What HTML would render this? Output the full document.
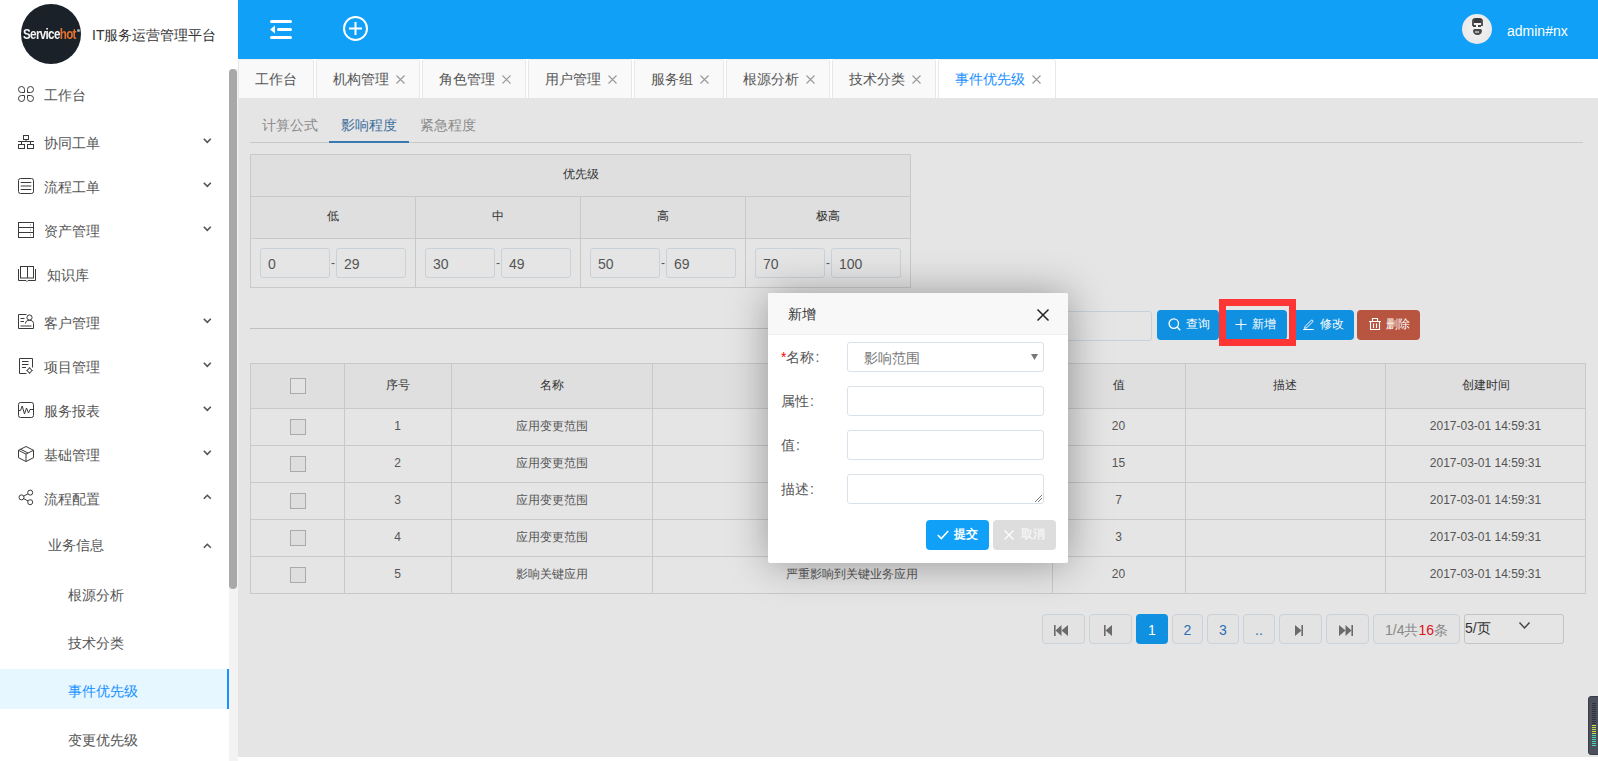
<!DOCTYPE html><html><head><meta charset="utf-8"><style>
*{box-sizing:border-box;margin:0;padding:0}
html,body{width:1598px;height:761px;overflow:hidden;background:#fff;font-family:"Liberation Sans",sans-serif;color:#555}
.a{position:absolute}
.t{position:absolute;white-space:nowrap;line-height:20px}
svg{position:absolute;overflow:visible}
</style></head><body>
<div class="a" style="left:0;top:0;width:229px;height:761px;background:#fff"></div>
<div class="a" style="left:21px;top:4px;width:60px;height:60px;border-radius:50%;background:#1a2129"></div>
<div class="t" style="left:23px;top:23.5px;font-size:14px;font-weight:bold;color:#f4f4f4;letter-spacing:-0.8px;transform:scaleX(0.83);transform-origin:0 0">Service<span style="color:#e4702e">hot</span></div>
<div class="a" style="left:77px;top:29px;width:3px;height:3px;border-radius:50%;background:#aaa"></div>
<div class="t" style="left:92px;top:25px;font-size:14px;color:#333">IT服务运营管理平台</div>
<div class="t" style="left:44px;top:85px;font-size:14px;color:#555">工作台</div>
<svg style="left:18px;top:86px" width="18" height="16" viewBox="0 0 18 16" fill="none" stroke="#3a3a3a" stroke-width="1"><path d="M6.5 6.5H3.5A3 3 0 1 1 6.5 3.5Z"/><path d="M9.5 6.5V3.5A3 3 0 1 1 12.5 6.5Z"/><path d="M6.5 9.5V12.5A3 3 0 1 1 3.5 9.5Z"/><path d="M9.5 9.5H12.5A3 3 0 1 1 9.5 12.5Z"/></svg>
<div class="t" style="left:44px;top:133px;font-size:14px;color:#555">协同工单</div>
<svg style="left:18px;top:135px" width="18" height="16" viewBox="0 0 18 16" fill="none" stroke="#3a3a3a" stroke-width="1"><rect x="5.5" y="0.5" width="5" height="4"/><path d="M0 6.5H16M8 4.5V6.5M3.5 6.5V9.5M12.5 6.5V9.5"/><rect x="0.5" y="9.5" width="6" height="4"/><rect x="9.5" y="9.5" width="6" height="4"/></svg>
<svg style="left:203px;top:138.0px" width="9" height="6" viewBox="0 0 9 6" fill="none" stroke="#555" stroke-width="1.6"><path d="M0.8 0.8L4.3 4.3L7.8 0.8"/></svg>
<div class="t" style="left:44px;top:177px;font-size:14px;color:#555">流程工单</div>
<svg style="left:18px;top:178px" width="18" height="16" viewBox="0 0 18 16" fill="none" stroke="#3a3a3a" stroke-width="1"><rect x="0.5" y="0.5" width="15" height="15" rx="2"/><path d="M2.7 4.5H13.3M2.7 8H13.3M2.7 11.5H13.3"/></svg>
<svg style="left:203px;top:182.0px" width="9" height="6" viewBox="0 0 9 6" fill="none" stroke="#555" stroke-width="1.6"><path d="M0.8 0.8L4.3 4.3L7.8 0.8"/></svg>
<div class="t" style="left:44px;top:221px;font-size:14px;color:#555">资产管理</div>
<svg style="left:18px;top:222px" width="18" height="16" viewBox="0 0 18 16" fill="none" stroke="#3a3a3a" stroke-width="1"><rect x="0.5" y="0.5" width="15" height="15"/><path d="M0.5 5.5H15.5M0.5 10.5H15.5"/><path d="M12 3H13M12 8H13M12 13H13" stroke="#aaa" stroke-width="1.5"/></svg>
<svg style="left:203px;top:226.0px" width="9" height="6" viewBox="0 0 9 6" fill="none" stroke="#555" stroke-width="1.6"><path d="M0.8 0.8L4.3 4.3L7.8 0.8"/></svg>
<div class="t" style="left:47px;top:265px;font-size:14px;color:#555">知识库</div>
<svg style="left:18px;top:266px" width="18" height="16" viewBox="0 0 18 16" fill="none" stroke="#3a3a3a" stroke-width="1"><rect x="2.5" y="0.5" width="13" height="11.5"/><path d="M9.5 0.5V12"/><path d="M0.5 3V14.5H8L9 15.5L10 14.5H17.5V3"/></svg>
<div class="t" style="left:44px;top:313px;font-size:14px;color:#555">客户管理</div>
<svg style="left:18px;top:314px" width="18" height="16" viewBox="0 0 18 16" fill="none" stroke="#3a3a3a" stroke-width="1"><path d="M8.5 0.5H0.5V14.5H15.5V9.5"/><circle cx="11.5" cy="3.5" r="2.6"/><path d="M7.5 9.5C7.5 7.2 9.3 6.3 11.5 6.3S15.5 7.2 15.5 9.5"/><path d="M2.5 4.5H6.5M2.5 7.5H6M2.5 12H13.5"/></svg>
<svg style="left:203px;top:318.0px" width="9" height="6" viewBox="0 0 9 6" fill="none" stroke="#555" stroke-width="1.6"><path d="M0.8 0.8L4.3 4.3L7.8 0.8"/></svg>
<div class="t" style="left:44px;top:357px;font-size:14px;color:#555">项目管理</div>
<svg style="left:18px;top:358px" width="18" height="16" viewBox="0 0 18 16" fill="none" stroke="#3a3a3a" stroke-width="1"><path d="M8.5 15.5H1.5V0.5H14.5V9.5"/><path d="M4 3.5H10.5M4 6.5H10.5M4 9.5H8"/><circle cx="11.5" cy="12.5" r="2"/><path d="M11.5 9.3V10.2M11.5 14.8V15.7M8.3 12.5H9.2M13.8 12.5H14.7" stroke-width="1.2"/></svg>
<svg style="left:203px;top:362.0px" width="9" height="6" viewBox="0 0 9 6" fill="none" stroke="#555" stroke-width="1.6"><path d="M0.8 0.8L4.3 4.3L7.8 0.8"/></svg>
<div class="t" style="left:44px;top:401px;font-size:14px;color:#555">服务报表</div>
<svg style="left:18px;top:402px" width="18" height="16" viewBox="0 0 18 16" fill="none" stroke="#3a3a3a" stroke-width="1"><rect x="0.5" y="0.5" width="15" height="15" rx="2"/><path d="M0.5 8.5H2.5L4.2 4L6.5 12L8.5 6L10.5 11L12 7.5H15.5"/></svg>
<svg style="left:203px;top:406.0px" width="9" height="6" viewBox="0 0 9 6" fill="none" stroke="#555" stroke-width="1.6"><path d="M0.8 0.8L4.3 4.3L7.8 0.8"/></svg>
<div class="t" style="left:44px;top:445px;font-size:14px;color:#555">基础管理</div>
<svg style="left:18px;top:446px" width="18" height="16" viewBox="0 0 18 16" fill="none" stroke="#3a3a3a" stroke-width="1"><path d="M8 0.5L15.5 4.3V11.7L8 15.5L0.5 11.7V4.3Z"/><path d="M0.5 4.3L8 8.1L15.5 4.3M8 8.1V15.5M2.6 3.2L10 7"/></svg>
<svg style="left:203px;top:450.0px" width="9" height="6" viewBox="0 0 9 6" fill="none" stroke="#555" stroke-width="1.6"><path d="M0.8 0.8L4.3 4.3L7.8 0.8"/></svg>
<div class="t" style="left:44px;top:489px;font-size:14px;color:#555">流程配置</div>
<svg style="left:18px;top:489px" width="18" height="16" viewBox="0 0 18 16" fill="none" stroke="#3a3a3a" stroke-width="1"><circle cx="12.2" cy="3.6" r="2.5"/><circle cx="3.5" cy="8.4" r="2.5"/><circle cx="12.2" cy="13.2" r="2.5"/><path d="M5.7 7.2L10 4.8M5.7 9.6L10 12"/></svg>
<svg style="left:203px;top:494.0px" width="9" height="6" viewBox="0 0 9 6" fill="none" stroke="#555" stroke-width="1.6"><path d="M0.8 4.8L4.3 1.3L7.8 4.8"/></svg>
<div class="t" style="left:48px;top:535px;font-size:14px;color:#555">业务信息</div>
<svg style="left:203px;top:543px" width="9" height="6" viewBox="0 0 9 6" fill="none" stroke="#555" stroke-width="1.6"><path d="M0.8 4.8L4.3 1.3L7.8 4.8"/></svg>
<div class="a" style="left:0;top:669px;width:227px;height:40px;background:#e6f7ff"></div>
<div class="a" style="left:227px;top:669px;width:2px;height:40px;background:#1890ff"></div>
<div class="t" style="left:68px;top:585px;font-size:14px;color:#555">根源分析</div>
<div class="t" style="left:68px;top:633px;font-size:14px;color:#555">技术分类</div>
<div class="t" style="left:68px;top:681px;font-size:14px;color:#1890ff">事件优先级</div>
<div class="t" style="left:68px;top:730px;font-size:14px;color:#555">变更优先级</div>
<div class="a" style="left:229px;top:69px;width:9px;height:692px;background:#f3f3f3"></div>
<div class="a" style="left:229px;top:69px;width:8px;height:520px;background:#a8a8a8;border-radius:4px"></div>
<div class="a" style="left:238px;top:0;width:1360px;height:59px;background:#10a0f7"></div>
<svg style="left:270px;top:20px" width="22" height="19" viewBox="0 0 22 19"><rect x="0" y="0" width="22" height="3" rx="1.5" fill="#fff"/><rect x="7" y="8" width="15" height="3" rx="1.5" fill="#fff"/><rect x="0" y="16" width="22" height="3" rx="1.5" fill="#fff"/><path d="M0 9.5L5 5.5V13.5Z" fill="#fff"/></svg>
<svg style="left:343px;top:16px" width="25" height="25" viewBox="0 0 25 25" fill="none" stroke="#fff" stroke-width="2"><circle cx="12.5" cy="12.5" r="11.5"/><path d="M6 12.5H19M12.5 6V19"/></svg>
<div class="a" style="left:1462px;top:14px;width:30px;height:30px;border-radius:50%;background:radial-gradient(circle at 50% 45%,#f4f4f4 0,#e9e9e9 70%,#dcdcdc 100%);overflow:hidden"><div class="a" style="left:0;top:0;width:30px;height:30px;filter:blur(0.6px)"><div class="a" style="left:9.5px;top:4px;width:11px;height:5px;border-radius:5px 5px 2px 2px;background:#3a3a3a"></div><div class="a" style="left:9.5px;top:6px;width:2px;height:6px;background:#555"></div><div class="a" style="left:18.5px;top:6px;width:2px;height:6px;background:#555"></div><div class="a" style="left:11px;top:11px;width:3px;height:1.5px;background:#444"></div><div class="a" style="left:16px;top:11px;width:3px;height:1.5px;background:#444"></div><div class="a" style="left:10.5px;top:15px;width:9px;height:6px;border-radius:2px 2px 5px 5px;background:#4a4a4a"></div><div class="a" style="left:13px;top:17px;width:4px;height:2px;background:#aaa"></div></div></div>
<div class="t" style="left:1507px;top:21px;font-size:14px;color:#fff">admin#nx</div>
<div class="a" style="left:238px;top:59px;width:1360px;height:39px;background:#fff"></div>
<div class="a" style="left:238px;top:59px;width:76px;height:39px;background:#f9f9f9;border:1px solid #e8e8e8;border-top-color:#efefef;border-bottom:none;border-radius:3px 3px 0 0"></div>
<div class="t" style="left:255px;top:69px;font-size:14px;color:#555">工作台</div>
<div class="a" style="left:316px;top:59px;width:104px;height:39px;background:#f9f9f9;border:1px solid #e8e8e8;border-top-color:#efefef;border-bottom:none;border-radius:3px 3px 0 0"></div>
<div class="t" style="left:333px;top:69px;font-size:14px;color:#555">机构管理</div>
<svg style="left:396px;top:75px" width="9" height="9" viewBox="0 0 9 9" fill="none" stroke="#999" stroke-width="1.1"><path d="M0.5 0.5L8.5 8.5M8.5 0.5L0.5 8.5"/></svg>
<div class="a" style="left:422px;top:59px;width:104px;height:39px;background:#f9f9f9;border:1px solid #e8e8e8;border-top-color:#efefef;border-bottom:none;border-radius:3px 3px 0 0"></div>
<div class="t" style="left:439px;top:69px;font-size:14px;color:#555">角色管理</div>
<svg style="left:502px;top:75px" width="9" height="9" viewBox="0 0 9 9" fill="none" stroke="#999" stroke-width="1.1"><path d="M0.5 0.5L8.5 8.5M8.5 0.5L0.5 8.5"/></svg>
<div class="a" style="left:528px;top:59px;width:104px;height:39px;background:#f9f9f9;border:1px solid #e8e8e8;border-top-color:#efefef;border-bottom:none;border-radius:3px 3px 0 0"></div>
<div class="t" style="left:545px;top:69px;font-size:14px;color:#555">用户管理</div>
<svg style="left:608px;top:75px" width="9" height="9" viewBox="0 0 9 9" fill="none" stroke="#999" stroke-width="1.1"><path d="M0.5 0.5L8.5 8.5M8.5 0.5L0.5 8.5"/></svg>
<div class="a" style="left:634px;top:59px;width:90px;height:39px;background:#f9f9f9;border:1px solid #e8e8e8;border-top-color:#efefef;border-bottom:none;border-radius:3px 3px 0 0"></div>
<div class="t" style="left:651px;top:69px;font-size:14px;color:#555">服务组</div>
<svg style="left:700px;top:75px" width="9" height="9" viewBox="0 0 9 9" fill="none" stroke="#999" stroke-width="1.1"><path d="M0.5 0.5L8.5 8.5M8.5 0.5L0.5 8.5"/></svg>
<div class="a" style="left:726px;top:59px;width:104px;height:39px;background:#f9f9f9;border:1px solid #e8e8e8;border-top-color:#efefef;border-bottom:none;border-radius:3px 3px 0 0"></div>
<div class="t" style="left:743px;top:69px;font-size:14px;color:#555">根源分析</div>
<svg style="left:806px;top:75px" width="9" height="9" viewBox="0 0 9 9" fill="none" stroke="#999" stroke-width="1.1"><path d="M0.5 0.5L8.5 8.5M8.5 0.5L0.5 8.5"/></svg>
<div class="a" style="left:832px;top:59px;width:104px;height:39px;background:#f9f9f9;border:1px solid #e8e8e8;border-top-color:#efefef;border-bottom:none;border-radius:3px 3px 0 0"></div>
<div class="t" style="left:849px;top:69px;font-size:14px;color:#555">技术分类</div>
<svg style="left:912px;top:75px" width="9" height="9" viewBox="0 0 9 9" fill="none" stroke="#999" stroke-width="1.1"><path d="M0.5 0.5L8.5 8.5M8.5 0.5L0.5 8.5"/></svg>
<div class="a" style="left:938px;top:59px;width:118px;height:40px;background:#fff;border:1px solid #e8e8e8;border-top-color:#efefef;border-bottom:none;border-radius:3px 3px 0 0"></div>
<div class="t" style="left:955px;top:69px;font-size:14px;color:#1890ff">事件优先级</div>
<svg style="left:1032px;top:75px" width="9" height="9" viewBox="0 0 9 9" fill="none" stroke="#999" stroke-width="1.1"><path d="M0.5 0.5L8.5 8.5M8.5 0.5L0.5 8.5"/></svg>
<div class="a" style="left:238px;top:98px;width:1360px;height:659px;background:#e5e5e5"></div>
<div class="a" style="left:250px;top:142px;width:1333px;height:1px;background:#c9c9c9"></div>
<div class="a" style="left:329px;top:141px;width:80px;height:2px;background:#3a78b0"></div>
<div class="t" style="left:262px;top:115px;font-size:14px;color:#8a8a8a">计算公式</div>
<div class="t" style="left:341px;top:115px;font-size:14px;color:#3d6e9c">影响程度</div>
<div class="t" style="left:420px;top:115px;font-size:14px;color:#8a8a8a">紧急程度</div>
<div class="a" style="left:250px;top:154px;width:661px;height:134px;background:#e5e5e5;border:1px solid #c9c9c9"></div>
<div class="a" style="left:251px;top:155px;width:659px;height:83px;background:#dfdfdf"></div>
<div class="a" style="left:251px;top:196px;width:659px;height:1px;background:#c9c9c9"></div>
<div class="a" style="left:251px;top:238px;width:659px;height:1px;background:#c9c9c9"></div>
<div class="a" style="left:415px;top:196px;width:1px;height:91px;background:#c9c9c9"></div>
<div class="a" style="left:580px;top:196px;width:1px;height:91px;background:#c9c9c9"></div>
<div class="a" style="left:745px;top:196px;width:1px;height:91px;background:#c9c9c9"></div>
<div class="t" style="left:250px;width:661px;text-align:center;top:164px;font-size:12px;color:#333">优先级</div>
<div class="t" style="left:250px;width:165px;text-align:center;top:206px;font-size:12px;color:#333">低</div>
<div class="a" style="left:260px;top:248px;width:70px;height:30px;border:1px solid #c9d1d9;border-radius:3px;background:#e5e5e5"></div>
<div class="t" style="left:268px;top:254px;font-size:14px;color:#555">0</div>
<div class="t" style="left:331px;top:253px;font-size:12px;color:#555">-</div>
<div class="a" style="left:336px;top:248px;width:70px;height:30px;border:1px solid #c9d1d9;border-radius:3px;background:#e5e5e5"></div>
<div class="t" style="left:344px;top:254px;font-size:14px;color:#555">29</div>
<div class="t" style="left:415px;width:165px;text-align:center;top:206px;font-size:12px;color:#333">中</div>
<div class="a" style="left:425px;top:248px;width:70px;height:30px;border:1px solid #c9d1d9;border-radius:3px;background:#e5e5e5"></div>
<div class="t" style="left:433px;top:254px;font-size:14px;color:#555">30</div>
<div class="t" style="left:496px;top:253px;font-size:12px;color:#555">-</div>
<div class="a" style="left:501px;top:248px;width:70px;height:30px;border:1px solid #c9d1d9;border-radius:3px;background:#e5e5e5"></div>
<div class="t" style="left:509px;top:254px;font-size:14px;color:#555">49</div>
<div class="t" style="left:580px;width:165px;text-align:center;top:206px;font-size:12px;color:#333">高</div>
<div class="a" style="left:590px;top:248px;width:70px;height:30px;border:1px solid #c9d1d9;border-radius:3px;background:#e5e5e5"></div>
<div class="t" style="left:598px;top:254px;font-size:14px;color:#555">50</div>
<div class="t" style="left:661px;top:253px;font-size:12px;color:#555">-</div>
<div class="a" style="left:666px;top:248px;width:70px;height:30px;border:1px solid #c9d1d9;border-radius:3px;background:#e5e5e5"></div>
<div class="t" style="left:674px;top:254px;font-size:14px;color:#555">69</div>
<div class="t" style="left:745px;width:165px;text-align:center;top:206px;font-size:12px;color:#333">极高</div>
<div class="a" style="left:755px;top:248px;width:70px;height:30px;border:1px solid #c9d1d9;border-radius:3px;background:#e5e5e5"></div>
<div class="t" style="left:763px;top:254px;font-size:14px;color:#555">70</div>
<div class="t" style="left:826px;top:253px;font-size:12px;color:#555">-</div>
<div class="a" style="left:831px;top:248px;width:70px;height:30px;border:1px solid #c9d1d9;border-radius:3px;background:#e5e5e5"></div>
<div class="t" style="left:839px;top:254px;font-size:14px;color:#555">100</div>
<div class="a" style="left:250px;top:328px;width:818px;height:1px;background:#c0c0c0"></div>
<div class="a" style="left:960px;top:311px;width:192px;height:30px;border:1px solid #c9d1d9;border-radius:3px;background:#e5e5e5"></div>
<div class="a" style="left:1157px;top:310px;width:62px;height:30px;background:#1090e0;border-radius:4px"></div>
<svg style="left:1169px;top:319px" width="12" height="12" viewBox="0 0 12 12" fill="none" stroke="#fff" stroke-width="1.3"><circle cx="4.8" cy="4.6" r="4.7"/><path d="M8.1 8L11.2 11.2"/></svg>
<div class="t" style="left:1186px;top:314px;font-size:12px;color:#fff">查询</div>
<div class="a" style="left:1222px;top:310px;width:65px;height:30px;background:#1090e0;border-radius:4px"></div>
<svg style="left:1235px;top:319px" width="12" height="12" viewBox="0 0 12 12" fill="none" stroke="#fff" stroke-width="1.3"><path d="M0.5 5.5H11.5M6 0V11" stroke-width="1.1"/></svg>
<div class="t" style="left:1252px;top:314px;font-size:12px;color:#fff">新增</div>
<div class="a" style="left:1290px;top:310px;width:64px;height:30px;background:#1090e0;border-radius:4px"></div>
<svg style="left:1303px;top:318px" width="12" height="12" viewBox="0 0 12 12" fill="none" stroke="#fff" stroke-width="1.3"><path d="M2.2 8.3L8.3 2.2A1.1 1.1 0 0 1 9.8 3.7L3.7 9.8L1.6 10.4Z" stroke-width="1"/><path d="M0.2 11.5H10.8" stroke-width="1.1"/></svg>
<div class="t" style="left:1320px;top:314px;font-size:12px;color:#fff">修改</div>
<div class="a" style="left:1357px;top:310px;width:63px;height:30px;background:#b85540;border-radius:4px"></div>
<svg style="left:1369px;top:318px" width="12" height="12" viewBox="0 0 12 12" fill="none" stroke="#fff" stroke-width="1.3"><path d="M0 3.5H12M3.5 3.5V0.5H8.5V3.5M1.5 3.5V11.5H10.5V3.5M4.5 5.5V10M7.5 5.5V10" stroke-width="1.1"/></svg>
<div class="t" style="left:1386px;top:314px;font-size:12px;color:#fff">删除</div>
<div class="a" style="left:1219px;top:299px;width:77px;height:47px;border:7px solid #fd3535"></div>
<div class="a" style="left:250px;top:363px;width:1336px;height:231px;background:#e5e5e5;border:1px solid #c9c9c9"></div>
<div class="a" style="left:251px;top:364px;width:1334px;height:44px;background:#dfdfdf"></div>
<div class="a" style="left:251px;top:408px;width:1334px;height:1px;background:#c9c9c9"></div>
<div class="a" style="left:251px;top:445px;width:1334px;height:1px;background:#c9c9c9"></div>
<div class="a" style="left:251px;top:482px;width:1334px;height:1px;background:#c9c9c9"></div>
<div class="a" style="left:251px;top:519px;width:1334px;height:1px;background:#c9c9c9"></div>
<div class="a" style="left:251px;top:556px;width:1334px;height:1px;background:#c9c9c9"></div>
<div class="a" style="left:344px;top:364px;width:1px;height:229px;background:#c9c9c9"></div>
<div class="a" style="left:451px;top:364px;width:1px;height:229px;background:#c9c9c9"></div>
<div class="a" style="left:652px;top:364px;width:1px;height:229px;background:#c9c9c9"></div>
<div class="a" style="left:1052px;top:364px;width:1px;height:229px;background:#c9c9c9"></div>
<div class="a" style="left:1185px;top:364px;width:1px;height:229px;background:#c9c9c9"></div>
<div class="a" style="left:1385px;top:364px;width:1px;height:229px;background:#c9c9c9"></div>
<div class="a" style="left:290px;top:378px;width:16px;height:16px;border:1.5px solid #aaa;background:#e3e3e3"></div>
<div class="t" style="left:344px;width:107px;text-align:center;top:375px;font-size:12px;color:#333">序号</div>
<div class="t" style="left:451px;width:201px;text-align:center;top:375px;font-size:12px;color:#333">名称</div>
<div class="t" style="left:652px;width:400px;text-align:center;top:375px;font-size:12px;color:#333">描述</div>
<div class="t" style="left:1052px;width:133px;text-align:center;top:375px;font-size:12px;color:#333">值</div>
<div class="t" style="left:1185px;width:200px;text-align:center;top:375px;font-size:12px;color:#333">描述</div>
<div class="t" style="left:1385px;width:201px;text-align:center;top:375px;font-size:12px;color:#333">创建时间</div>
<div class="a" style="left:290px;top:419px;width:16px;height:16px;border:1.5px solid #aaa;background:#dedede"></div>
<div class="t" style="left:344px;width:107px;text-align:center;top:416px;font-size:12px;color:#555">1</div>
<div class="t" style="left:451px;width:201px;text-align:center;top:416px;font-size:12px;color:#555">应用变更范围</div>
<div class="t" style="left:1052px;width:133px;text-align:center;top:416px;font-size:12px;color:#555">20</div>
<div class="t" style="left:1385px;width:201px;text-align:center;top:416px;font-size:12px;color:#555">2017-03-01 14:59:31</div>
<div class="a" style="left:290px;top:456px;width:16px;height:16px;border:1.5px solid #aaa;background:#dedede"></div>
<div class="t" style="left:344px;width:107px;text-align:center;top:453px;font-size:12px;color:#555">2</div>
<div class="t" style="left:451px;width:201px;text-align:center;top:453px;font-size:12px;color:#555">应用变更范围</div>
<div class="t" style="left:1052px;width:133px;text-align:center;top:453px;font-size:12px;color:#555">15</div>
<div class="t" style="left:1385px;width:201px;text-align:center;top:453px;font-size:12px;color:#555">2017-03-01 14:59:31</div>
<div class="a" style="left:290px;top:493px;width:16px;height:16px;border:1.5px solid #aaa;background:#dedede"></div>
<div class="t" style="left:344px;width:107px;text-align:center;top:490px;font-size:12px;color:#555">3</div>
<div class="t" style="left:451px;width:201px;text-align:center;top:490px;font-size:12px;color:#555">应用变更范围</div>
<div class="t" style="left:1052px;width:133px;text-align:center;top:490px;font-size:12px;color:#555">7</div>
<div class="t" style="left:1385px;width:201px;text-align:center;top:490px;font-size:12px;color:#555">2017-03-01 14:59:31</div>
<div class="a" style="left:290px;top:530px;width:16px;height:16px;border:1.5px solid #aaa;background:#dedede"></div>
<div class="t" style="left:344px;width:107px;text-align:center;top:527px;font-size:12px;color:#555">4</div>
<div class="t" style="left:451px;width:201px;text-align:center;top:527px;font-size:12px;color:#555">应用变更范围</div>
<div class="t" style="left:1052px;width:133px;text-align:center;top:527px;font-size:12px;color:#555">3</div>
<div class="t" style="left:1385px;width:201px;text-align:center;top:527px;font-size:12px;color:#555">2017-03-01 14:59:31</div>
<div class="a" style="left:290px;top:567px;width:16px;height:16px;border:1.5px solid #aaa;background:#dedede"></div>
<div class="t" style="left:344px;width:107px;text-align:center;top:564px;font-size:12px;color:#555">5</div>
<div class="t" style="left:451px;width:201px;text-align:center;top:564px;font-size:12px;color:#555">影响关键应用</div>
<div class="t" style="left:652px;width:400px;text-align:center;top:564px;font-size:12px;color:#555">严重影响到关键业务应用</div>
<div class="t" style="left:1052px;width:133px;text-align:center;top:564px;font-size:12px;color:#555">20</div>
<div class="t" style="left:1385px;width:201px;text-align:center;top:564px;font-size:12px;color:#555">2017-03-01 14:59:31</div>
<div class="a" style="left:1042px;top:614px;width:43px;height:30px;background:#e3e3e3;border:1px solid #c9d1d9;border-radius:4px"></div>
<div class="a" style="left:1089px;top:614px;width:43px;height:30px;background:#e3e3e3;border:1px solid #c9d1d9;border-radius:4px"></div>
<div class="a" style="left:1136px;top:614px;width:32px;height:30px;background:#1090e0;border-radius:4px"></div>
<div class="t" style="left:1136px;width:32px;text-align:center;top:620px;font-size:14px;color:#fff">1</div>
<div class="a" style="left:1172px;top:614px;width:31px;height:30px;background:#e3e3e3;border:1px solid #c9d1d9;border-radius:4px"></div>
<div class="t" style="left:1172px;width:31px;text-align:center;top:620px;font-size:14px;color:#2a6fb0">2</div>
<div class="a" style="left:1207px;top:614px;width:32px;height:30px;background:#e3e3e3;border:1px solid #c9d1d9;border-radius:4px"></div>
<div class="t" style="left:1207px;width:32px;text-align:center;top:620px;font-size:14px;color:#2a6fb0">3</div>
<div class="a" style="left:1243px;top:614px;width:32px;height:30px;background:#e3e3e3;border:1px solid #c9d1d9;border-radius:4px"></div>
<div class="t" style="left:1243px;width:32px;text-align:center;top:620px;font-size:14px;color:#2a6fb0">..</div>
<div class="a" style="left:1279px;top:614px;width:43px;height:30px;background:#e3e3e3;border:1px solid #c9d1d9;border-radius:4px"></div>
<div class="a" style="left:1326px;top:614px;width:43px;height:30px;background:#e3e3e3;border:1px solid #c9d1d9;border-radius:4px"></div>
<svg style="left:1054px;top:625px" width="14" height="11" viewBox="0 0 14 11" fill="#6b6b6b"><rect x="0" y="0" width="1.6" height="11"/><path d="M1.5 5.5L7.5 0V11Z"/><path d="M7.5 5.5L14 0V11Z"/></svg>
<svg style="left:1104px;top:625px" width="8" height="11" viewBox="0 0 8 11" fill="#6b6b6b"><rect x="0" y="0" width="1.6" height="11"/><path d="M1.5 5.5L8 0V11Z"/></svg>
<svg style="left:1295px;top:625px" width="8" height="11" viewBox="0 0 8 11" fill="#6b6b6b"><rect x="6.4" y="0" width="1.6" height="11"/><path d="M6.5 5.5L0 0V11Z"/></svg>
<svg style="left:1339px;top:625px" width="14" height="11" viewBox="0 0 14 11" fill="#6b6b6b"><rect x="12.4" y="0" width="1.6" height="11"/><path d="M12.5 5.5L6.5 0V11Z"/><path d="M6.5 5.5L0 0V11Z"/></svg>
<div class="a" style="left:1373px;top:614px;width:87px;height:30px;background:#e3e3e3;border:1px solid #c9d1d9;border-radius:4px"></div>
<div class="t" style="left:1373px;width:87px;text-align:center;top:620px;font-size:14px;color:#888">1/4共<span style="color:#e0101e">16</span>条</div>
<div class="a" style="left:1464px;top:614px;width:100px;height:30px;background:#e5e5e5;border:1px solid #c4c4c4;border-radius:3px"></div>
<div class="t" style="left:1465px;top:618px;font-size:14px;color:#333">5/页</div>
<svg style="left:1519px;top:622px" width="11" height="7" viewBox="0 0 11 7" fill="none" stroke="#444" stroke-width="1.4"><path d="M0.5 0.5L5.5 6L10.5 0.5"/></svg>
<div class="a" style="left:238px;top:757px;width:1360px;height:4px;background:#fff"></div>
<div class="a" style="left:1588px;top:696px;width:14px;height:59px;background:#4b505c;border:1px solid #3a3e48;border-radius:3px"></div>
<div class="a" style="left:1592px;top:703px;width:4px;height:1px;background:#2e3138"></div>
<div class="a" style="left:1592px;top:705px;width:4px;height:1px;background:#2e3138"></div>
<div class="a" style="left:1592px;top:707px;width:4px;height:1px;background:#2e3138"></div>
<div class="a" style="left:1592px;top:709px;width:4px;height:1px;background:#2e3138"></div>
<div class="a" style="left:1592px;top:711px;width:4px;height:1px;background:#2e3138"></div>
<div class="a" style="left:1592px;top:713px;width:4px;height:1px;background:#2e3138"></div>
<div class="a" style="left:1592px;top:715px;width:4px;height:1px;background:#2e3138"></div>
<div class="a" style="left:1592px;top:717px;width:4px;height:1px;background:#2e3138"></div>
<div class="a" style="left:1592px;top:719px;width:4px;height:1px;background:#2e3138"></div>
<div class="a" style="left:1592px;top:721px;width:4px;height:1px;background:#2e3138"></div>
<div class="a" style="left:1592px;top:723px;width:4px;height:1px;background:#2e3138"></div>
<div class="a" style="left:1592px;top:725px;width:4px;height:1px;background:#c8dc48"></div>
<div class="a" style="left:1592px;top:727px;width:4px;height:1px;background:#c8dc48"></div>
<div class="a" style="left:1592px;top:729px;width:4px;height:1px;background:#c8dc48"></div>
<div class="a" style="left:1592px;top:731px;width:4px;height:1px;background:#c8dc48"></div>
<div class="a" style="left:1592px;top:733px;width:4px;height:1px;background:#c8dc48"></div>
<div class="a" style="left:1592px;top:735px;width:4px;height:1px;background:#48d8b0"></div>
<div class="a" style="left:1592px;top:737px;width:4px;height:1px;background:#48d8b0"></div>
<div class="a" style="left:1592px;top:739px;width:4px;height:1px;background:#48d8b0"></div>
<div class="a" style="left:1592px;top:741px;width:4px;height:1px;background:#48d8b0"></div>
<div class="a" style="left:1592px;top:743px;width:4px;height:1px;background:#48d8b0"></div>
<div class="a" style="left:1592px;top:745px;width:4px;height:1px;background:#48d8b0"></div>
<div class="a" style="left:768px;top:293px;width:300px;height:270px;background:#fff;border-radius:2px;box-shadow:1px 1px 40px rgba(0,0,0,.35)"></div>
<div class="a" style="left:768px;top:293px;width:300px;height:42px;background:#f8f8f8;border-bottom:1px solid #eee;border-radius:2px 2px 0 0"></div>
<div class="t" style="left:788px;top:304px;font-size:14px;color:#333">新增</div>
<svg style="left:1037px;top:309px" width="12" height="12" viewBox="0 0 12 12" fill="none" stroke="#222" stroke-width="1.5"><path d="M0.5 0.5L11.5 11.5M11.5 0.5L0.5 11.5"/></svg>
<div class="t" style="left:781px;top:347px;font-size:14px;color:#555"><span style="color:#f00">*</span>名称<span style="margin-left:1px">:</span></div>
<div class="a" style="left:847px;top:342px;width:197px;height:30px;border:1px solid #d9e2e8;border-radius:3px;background:#fff"></div>
<div class="t" style="left:781px;top:391px;font-size:14px;color:#555">属性<span style="margin-left:1px">:</span></div>
<div class="a" style="left:847px;top:386px;width:197px;height:30px;border:1px solid #d9e2e8;border-radius:3px;background:#fff"></div>
<div class="t" style="left:781px;top:435px;font-size:14px;color:#555">值<span style="margin-left:1px">:</span></div>
<div class="a" style="left:847px;top:430px;width:197px;height:30px;border:1px solid #d9e2e8;border-radius:3px;background:#fff"></div>
<div class="t" style="left:781px;top:479px;font-size:14px;color:#555">描述<span style="margin-left:1px">:</span></div>
<div class="a" style="left:847px;top:474px;width:197px;height:30px;border:1px solid #d9e2e8;border-radius:3px;background:#fff"></div>
<div class="t" style="left:864px;top:348px;font-size:14px;color:#777">影响范围</div>
<svg style="left:1031px;top:354px" width="7" height="6" viewBox="0 0 7 6" fill="#777"><path d="M0 0H7L3.5 6Z"/></svg>
<svg style="left:1034px;top:494px" width="8" height="8" viewBox="0 0 8 8" fill="none" stroke="#777" stroke-width="1"><path d="M1 8L8 1M4 8L8 4"/></svg>
<div class="a" style="left:926px;top:520px;width:63px;height:30px;background:#10a0f7;border-radius:4px"></div>
<svg style="left:937px;top:530px" width="12" height="10" viewBox="0 0 12 10" fill="none" stroke="#fff" stroke-width="1.6"><path d="M0.8 5L4.3 8.5L11.2 1"/></svg>
<div class="t" style="left:954px;top:524px;font-size:12px;font-weight:bold;color:#fff">提交</div>
<div class="a" style="left:993px;top:520px;width:63px;height:30px;background:#dddddd;border-radius:4px"></div>
<svg style="left:1004px;top:530px" width="10" height="10" viewBox="0 0 10 10" fill="none" stroke="#fff" stroke-width="1.2"><path d="M0.5 0.5L9.5 9.5M9.5 0.5L0.5 9.5"/></svg>
<div class="t" style="left:1021px;top:524px;font-size:12px;font-weight:bold;color:#f4f4f4">取消</div>
</body></html>
